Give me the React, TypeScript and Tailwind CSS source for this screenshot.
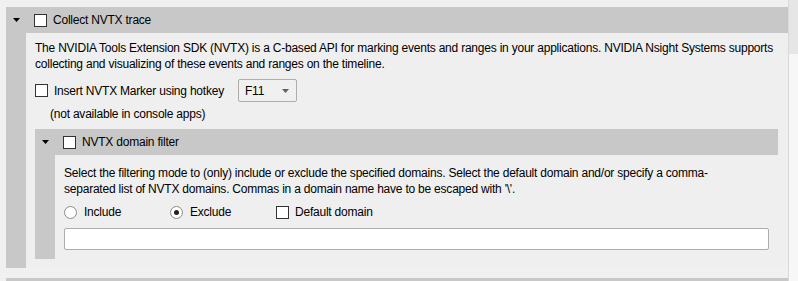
import type { ReactNode } from "react";

function Arrow({ color = "#000" }: { color?: string }) {
  return (
    <svg width="7" height="4" viewBox="0 0 7 4">
      <path d="M0 0H7L3.5 4Z" fill={color} />
    </svg>
  );
}

function CheckBox() {
  return <span className="block h-[13px] w-[13px] shrink-0 border border-[#333333] bg-white" />;
}

function Radio({ checked }: { checked?: boolean }) {
  return (
    <span className="flex h-[13px] w-[13px] shrink-0 items-center justify-center rounded-full border border-[#8a8a8a] bg-white">
      {checked ? <span className="block h-[5px] w-[5px] rounded-full bg-[#222]" /> : null}
    </span>
  );
}

function Section({ title, children, bodyClass }: { title: string; children: ReactNode; bodyClass: string }) {
  return (
    <div className="flex min-w-0 flex-col">
      <div className="flex h-[26px] items-center bg-[#c8c8c8]">
        <div className="flex w-[20px] justify-center">
          <Arrow />
        </div>
        <div className="ml-[8px]">
          <CheckBox />
        </div>
        <span className="ml-[6px]">{title}</span>
      </div>
      <div className="flex min-w-0">
        <div className="w-[20px] shrink-0 bg-[#c8c8c8]" />
        <div className={"min-w-0 flex-1 bg-[#efefef] " + bodyClass}>{children}</div>
      </div>
    </div>
  );
}

export default function App() {
  return (
    <div className="flex h-[281px] w-[798px] overflow-hidden bg-[#f0f0f0] font-['Segoe_UI','Liberation_Sans',Arial,sans-serif] text-[12px] leading-[16px] tracking-[-0.22px] text-black">
      <div className="flex w-[788px] shrink-0 flex-col pl-[6px] pt-[7px]">
        <Section title="Collect NVTX trace" bodyClass="pl-[9px] pr-[10px] pt-[7px] pb-[9px]">
          <p className="whitespace-nowrap">
            The NVIDIA Tools Extension SDK (NVTX) is a C-based API for marking events and ranges in your applications. NVIDIA Nsight Systems supports
            <br />
            collecting and visualizing of these events and ranges on the timeline.
          </p>
          <div className="mt-[7px] flex h-[23px] items-center">
            <div className="flex w-[203px] items-center gap-[6px]">
              <CheckBox />
              <span>Insert NVTX Marker using hotkey</span>
            </div>
            <div className="flex h-[23px] w-[59px] items-center justify-between rounded-[2px] border border-[#adadad] bg-[#f0f0f0] pl-[6px] pr-[7px]">
              <span>F11</span>
              <Arrow color="#606060" />
            </div>
          </div>
          <p className="mt-[4px] pl-[15px]">(not available in console apps)</p>
          <div className="mt-[7px]">
            <Section title="NVTX domain filter" bodyClass="pl-[9px] pr-[9px] pt-[10px] pb-[9px]">
              <p className="whitespace-nowrap">
                Select the filtering mode to (only) include or exclude the specified domains. Select the default domain and/or specify a comma-
                <br />
                separated list of NVTX domains. Commas in a domain name have to be escaped with '\'.
              </p>
              <div className="mt-[7px] flex h-[16px] items-center">
                <div className="flex w-[106px] items-center gap-[7px]">
                  <Radio />
                  <span>Include</span>
                </div>
                <div className="flex w-[106px] items-center gap-[7px]">
                  <Radio checked />
                  <span>Exclude</span>
                </div>
                <div className="flex items-center gap-[6px]">
                  <CheckBox />
                  <span>Default domain</span>
                </div>
              </div>
              <div className="mt-[8px] h-[22px] rounded-[2px] border border-[#adadad] bg-white" />
            </Section>
          </div>
        </Section>
        <div className="mt-[10px] h-[26px] shrink-0 bg-[#c8c8c8]" />
      </div>
      <div className="flex w-[10px] shrink-0 flex-col border-l border-[#d9d9d9] bg-[#f7f7f7]">
        <div className="h-[54px] bg-[#e6e6e6]" />
      </div>
    </div>
  );
}
